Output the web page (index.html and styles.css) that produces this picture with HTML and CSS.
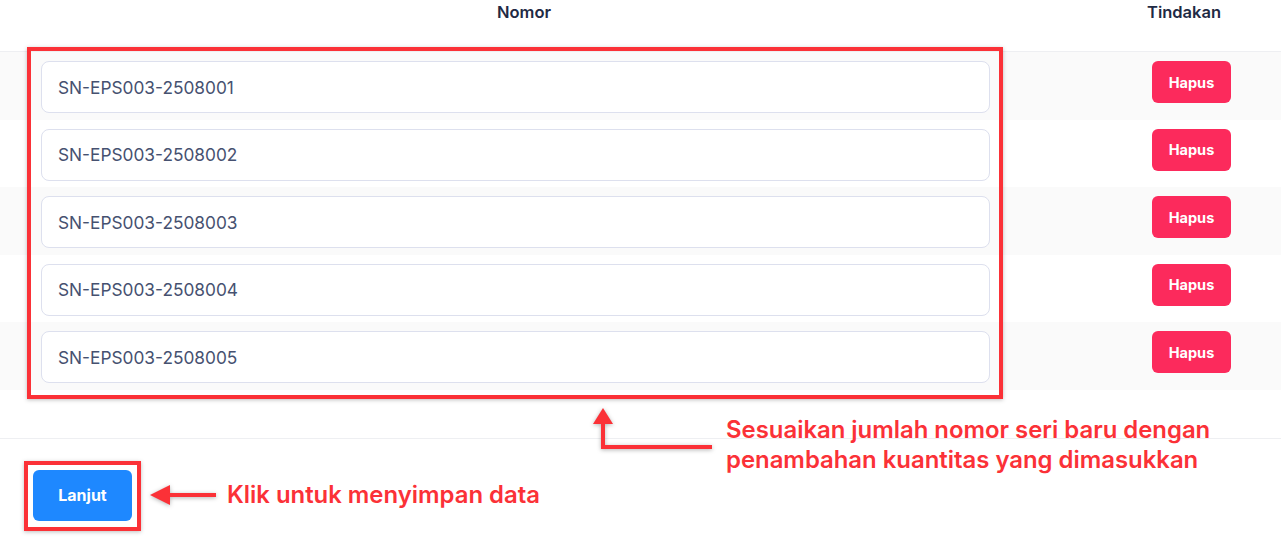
FILE: index.html
```html
<!DOCTYPE html>
<html lang="id">
<head>
  <meta charset="utf-8" />
  <meta name="viewport" content="width=device-width, initial-scale=1" />
  <title>Nomor Seri</title>
  <link rel="stylesheet" href="styles.css">
</head>
<body>
  <div class="page">
    <div class="serials">
      <div class="thead">
        <div class="th th-no">Nomor</div>
        <div class="th th-act">Tindakan</div>
      </div>
      <div class="row">
        <div class="cell-no"><input class="field" type="text" value="SN-EPS003-2508001"></div>
        <div class="cell-act"><button class="btn-del">Hapus</button></div>
      </div>
      <div class="row">
        <div class="cell-no"><input class="field" type="text" value="SN-EPS003-2508002"></div>
        <div class="cell-act"><button class="btn-del">Hapus</button></div>
      </div>
      <div class="row">
        <div class="cell-no"><input class="field" type="text" value="SN-EPS003-2508003"></div>
        <div class="cell-act"><button class="btn-del">Hapus</button></div>
      </div>
      <div class="row">
        <div class="cell-no"><input class="field" type="text" value="SN-EPS003-2508004"></div>
        <div class="cell-act"><button class="btn-del">Hapus</button></div>
      </div>
      <div class="row">
        <div class="cell-no"><input class="field" type="text" value="SN-EPS003-2508005"></div>
        <div class="cell-act"><button class="btn-del">Hapus</button></div>
      </div>
    </div>

    <div class="actions">
      <button class="btn-next">Lanjut</button>
    </div>

    <!-- annotations drawn over the screenshot -->
    <div class="mark mark-list"></div>
    <div class="mark mark-btn"></div>

    <svg class="arrow arrow-up" width="130" height="50" viewBox="0 0 130 50">
      <polygon points="13,0 23,16 3,16" fill="#fb3137"/>
      <path d="M13 15 V39 H122" fill="none" stroke="#fb3137" stroke-width="4"/>
    </svg>
    <svg class="arrow arrow-left" width="70" height="24" viewBox="0 0 70 24">
      <polygon points="0,12 20,2 20,22" fill="#fb3137"/>
      <path d="M19 12 H66" fill="none" stroke="#fb3137" stroke-width="4"/>
    </svg>

    <div class="note note-list">Sesuaikan jumlah nomor seri baru dengan<br>penambahan kuantitas yang dimasukkan</div>
    <div class="note note-btn">Klik untuk menyimpan data</div>
  </div>
</body>
</html>
```

FILE: styles.css
```css
:root{
  --text: #1f2a44;
  --muted: #465170;
  --line: #eeeff2;
  --stripe: #fafafa;
  --danger: #fc2a5c;
  --primary: #1e88ff;
  --mark: #fb3137;
}
html, body { margin: 0; background: #fff; }
body{
  font-family: Inter, "Noto Sans", sans-serif;
  color: var(--text);
}
.page{ position: relative; width: 1281px; height: 542px; overflow: hidden; }

.thead{ display: grid; grid-template-columns: 1048px 1fr; height: 52px; border-bottom: 1px solid var(--line); box-sizing: border-box; }
.th{ font-weight: 600; font-size: 16.5px; line-height: 20px; padding-top: 2px; }
.th-no{ text-align: center; }
.th-act{ padding-left: 99px; }

.row{ display: grid; grid-template-columns: 1048px 1fr; height: 67.6px; box-sizing: border-box; padding-top: 9px; }
.row:nth-child(even){ background: var(--stripe); }
.cell-no{ padding-left: 41px; }
.cell-act{ padding-left: 104px; }

.field{
  display: block; box-sizing: border-box;
  width: 949px; height: 52px;
  border: 1px solid #dde0ee; border-radius: 8px;
  background: #fff; padding: 0 16px;
  font: 400 17.3px Inter, sans-serif; color: var(--muted);
  outline: none;
}
.btn-del{
  width: 79px; height: 42px; border: 0; border-radius: 6px;
  background: var(--danger); color: #fff;
  font: 700 14.5px Inter, sans-serif; cursor: pointer;
}

.serials{ padding-bottom: 48px; border-bottom: 1px solid var(--line); }
.actions{ padding: 31px 0 0 33px; }
.btn-next{
  width: 99px; height: 51px; border: 0; border-radius: 6px;
  background: var(--primary); color: #fff;
  font: 700 16px Inter, sans-serif; cursor: pointer;
}

.mark{ position: absolute; border: 4px solid var(--mark); box-shadow: 0 1px 4px rgba(0,0,0,.25); }
.mark-list{ left: 27px; top: 47px; width: 968px; height: 344px; }
.mark-btn{ left: 24px; top: 461px; width: 109px; height: 62px; }

.arrow{ position: absolute; filter: drop-shadow(0 1px 2px rgba(0,0,0,.3)); }
.arrow-up{ left: 590px; top: 408px; }
.arrow-left{ left: 150px; top: 483px; }

.note{ position: absolute; color: var(--mark); font-weight: 600; font-size: 23.9px; line-height: 30px; }
.note-list{ left: 726px; top: 415px; }
.note-btn{ left: 227px; top: 480px; }
```
